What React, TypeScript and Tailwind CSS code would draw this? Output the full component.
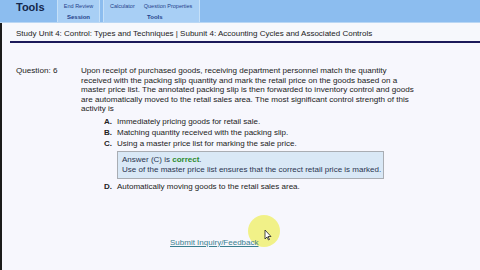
import React from "react";

export default function App() {
  const font = { fontFamily: '"Liberation Sans", Arial, sans-serif' };
  return (
    <div className="w-[480px] h-[270px] overflow-hidden bg-[#f7f7fd] flex flex-col relative" style={font}>
      {/* cursor highlight (behind text) */}
      <div className="absolute left-[248px] top-[215px] w-[32px] h-[32px] rounded-full bg-[#f1f17c] opacity-90 blur-[0.5px]" />
      {/* top ribbon */}
      <div className="h-[23px] bg-[#8cbdef] flex items-start border-b border-[#b9d7f4]">
        <div className="w-[57px] pl-[16px] pt-[1px] text-[11px] font-bold text-[#14264a] leading-[12px]">Tools</div>
        <div className="w-[43px] h-[22px] bg-[#a8cff5] border-x border-[#c5e0f8] flex flex-col items-center pt-[3px]">
          <span className="text-[5.5px] leading-[7px] text-[#1f3f8a]">End Review</span>
          <span className="text-[6px] leading-[8px] font-bold text-[#1f3f8a] mt-[3px]">Session</span>
        </div>
        <div className="w-[3px]" />
        <div className="w-[97px] h-[22px] bg-[#a8cff5] border-x border-[#c5e0f8] flex flex-col pt-[3px]">
          <div className="flex text-[5.5px] leading-[7px] text-[#1f3f8a] pl-[6px] gap-[9px]">
            <span>Calculator</span>
            <span>Question Properties</span>
          </div>
          <span className="text-[6px] leading-[8px] font-bold text-[#1f3f8a] mt-[3px] pl-[43px]">Tools</span>
        </div>
      </div>
      {/* body with left border */}
      <div className="flex-1 flex flex-col border-l-2 border-[#1b1b1b] relative">
        <div className="h-[18px] bg-[#f6f8fc] flex items-end pl-[14px] pb-[2px] text-[8px] leading-[10px] text-[#222]">
          Study Unit 4: Control: Types and Techniques | Subunit 4: Accounting Cycles and Associated Controls
        </div>
        <div className="ml-[8px] h-[2px] bg-[#1c1a5a]" />
        <div className="flex pt-[23px] text-[8.1px] text-[#222]">
          <div className="w-[79px] pl-[14px] shrink-0 leading-[9.5px]">Question: 6</div>
          <div className="w-[370px]">
            <p className="leading-[9.5px] whitespace-nowrap">
              Upon receipt of purchased goods, receiving department personnel match the quantity<br />
              received with the packing slip quantity and mark the retail price on the goods based on a<br />
              master price list. The annotated packing slip is then forwarded to inventory control and goods<br />
              are automatically moved to the retail sales area. The most significant control strength of this<br />
              activity is
            </p>
            <div className="pl-[23px] mt-[2px] flex flex-col leading-[11px] text-[8px]">
              <div className="flex h-[11px] items-center"><span className="w-[13px] font-bold">A.</span><span>Immediately pricing goods for retail sale.</span></div>
              <div className="flex h-[11px] items-center"><span className="w-[13px] font-bold">B.</span><span>Matching quantity received with the packing slip.</span></div>
              <div className="flex h-[11px] items-center"><span className="w-[13px] font-bold">C.</span><span>Using a master price list for marking the sale price.</span></div>
              <div className="ml-[13px] mt-[2.5px] mb-[1.5px] w-[267px] h-[28px] bg-[#d9e8f6] border border-[#a9adb3] px-[4px] pt-[3px] text-[#2a3550] leading-[10px]">
                <div>Answer (C) is <span className="font-bold text-[#2e8b2e]">correct</span>.</div>
                <div className="whitespace-nowrap">Use of the master price list ensures that the correct retail price is marked.</div>
              </div>
              <div className="flex h-[11px] items-center"><span className="w-[13px] font-bold">D.</span><span>Automatically moving goods to the retail sales area.</span></div>
            </div>
          </div>
        </div>
        <div className="pl-[168px] mt-[46px] text-[8px] leading-[10px] relative">
          <span className="text-[#3a7f8f] underline">Submit Inquiry/Feedback</span>
        </div>
      </div>
      <svg className="absolute left-[264px] top-[229px]" width="8" height="12" viewBox="0 0 8 12">
        <path d="M1 1 L1 10 L3 8 L4.5 11 L5.5 10.5 L4 7.5 L7 7.5 Z" fill="#fff" stroke="#222" strokeWidth="0.8" />
      </svg>
    </div>
  );
}
